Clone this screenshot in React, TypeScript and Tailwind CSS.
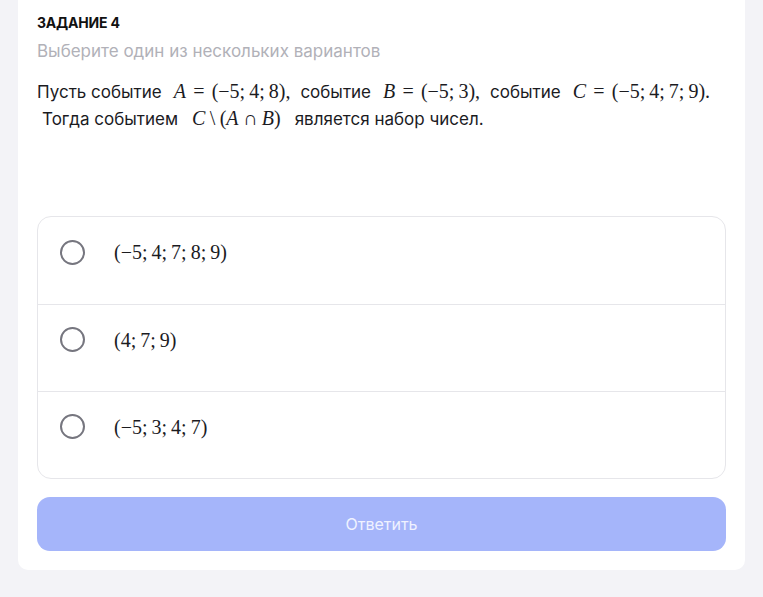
import React from "react";

const serif = "font-['Liberation_Serif','Times_New_Roman',serif]";

function V({ children }: { children: React.ReactNode }) {
  return <span className="italic">{children}</span>;
}

function Semi() {
  return <span className="mr-[0.2em]">;</span>;
}

function Tuple({ items }: { items: string[] }) {
  return (
    <span>
      (
      {items.map((it, i) => (
        <React.Fragment key={i}>
          {it.startsWith("-") ? (
            <>
              <span>−</span>
              {it.slice(1)}
            </>
          ) : (
            it
          )}
          {i < items.length - 1 ? <Semi /> : null}
        </React.Fragment>
      ))}
      )
    </span>
  );
}

function Eq({ name, items }: { name: string; items: string[] }) {
  return (
    <span className={`${serif} text-[20px] leading-none mx-[12px] whitespace-nowrap`}>
      <V>{name}</V>
      <span className="mx-[0.36em]">=</span>
      <Tuple items={items} />
    </span>
  );
}

const options = [
  ["-5", "4", "7", "8", "9"],
  ["4", "7", "9"],
  ["-5", "3", "4", "7"],
];

export default function App() {
  return (
    <div className="min-h-[597px] bg-[#f3f3f7] px-[18px] font-['Inter','Noto_Sans',sans-serif] text-[#1b1b1f]">
      <div className="bg-white rounded-b-[10px] px-[19px] pt-[13px] pb-[19px]">
        <div className="text-[14px] font-bold leading-[20px] tracking-[-0.2px] text-[#111]">ЗАДАНИЕ 4</div>
        <div className="mt-[7px] text-[17px] leading-[22px] text-[#b1b1b8]">Выберите один из нескольких вариантов</div>
        <div className="mt-[17px] text-[17px] leading-[27px] h-[137px]">
          <div className="whitespace-nowrap h-[27px]">
            Пусть событие
            <Eq name="A" items={["-5", "4", "8"]} />
            <span className={`${serif} text-[20px] leading-none -ml-[12px] mr-[10px]`}>,</span>
            событие
            <Eq name="B" items={["-5", "3"]} />
            <span className={`${serif} text-[20px] leading-none -ml-[12px] mr-[10px]`}>,</span>
            событие
            <Eq name="C" items={["-5", "4", "7", "9"]} />
            <span className={`${serif} text-[20px] leading-none -ml-[12px]`}>.</span>
          </div>
          <div className="whitespace-nowrap pl-[5px] h-[27px]">
            Тогда событием
            <span className={`${serif} text-[20px] leading-none mx-[14px]`}>
              <V>C</V>
              <span className="mx-[0.22em]">\</span>(<V>A</V>
              <span className="mx-[0.22em]">∩</span>
              <V>B</V>)
            </span>
            является набор чисел.
          </div>
        </div>
        <div className="border border-[#e6e6ea] rounded-[14px] overflow-hidden">
          {options.map((o, i) => (
            <div
              key={i}
              className={`flex items-center h-[87px] pl-[22px] pb-[17px] ${i > 0 ? "border-t border-[#e6e6ea]" : ""}`}
            >
              <div className="w-[25px] h-[25px] rounded-full border-[2.5px] border-[#76767f] shrink-0" />
              <span className={`${serif} text-[20px] ml-[29px]`}>
                <Tuple items={o} />
              </span>
            </div>
          ))}
        </div>
        <button className="mt-[18px] w-full h-[54px] rounded-[13px] bg-[#a5b5fa] text-[#f0f2ff] text-[16px]">
          Ответить
        </button>
      </div>
    </div>
  );
}
